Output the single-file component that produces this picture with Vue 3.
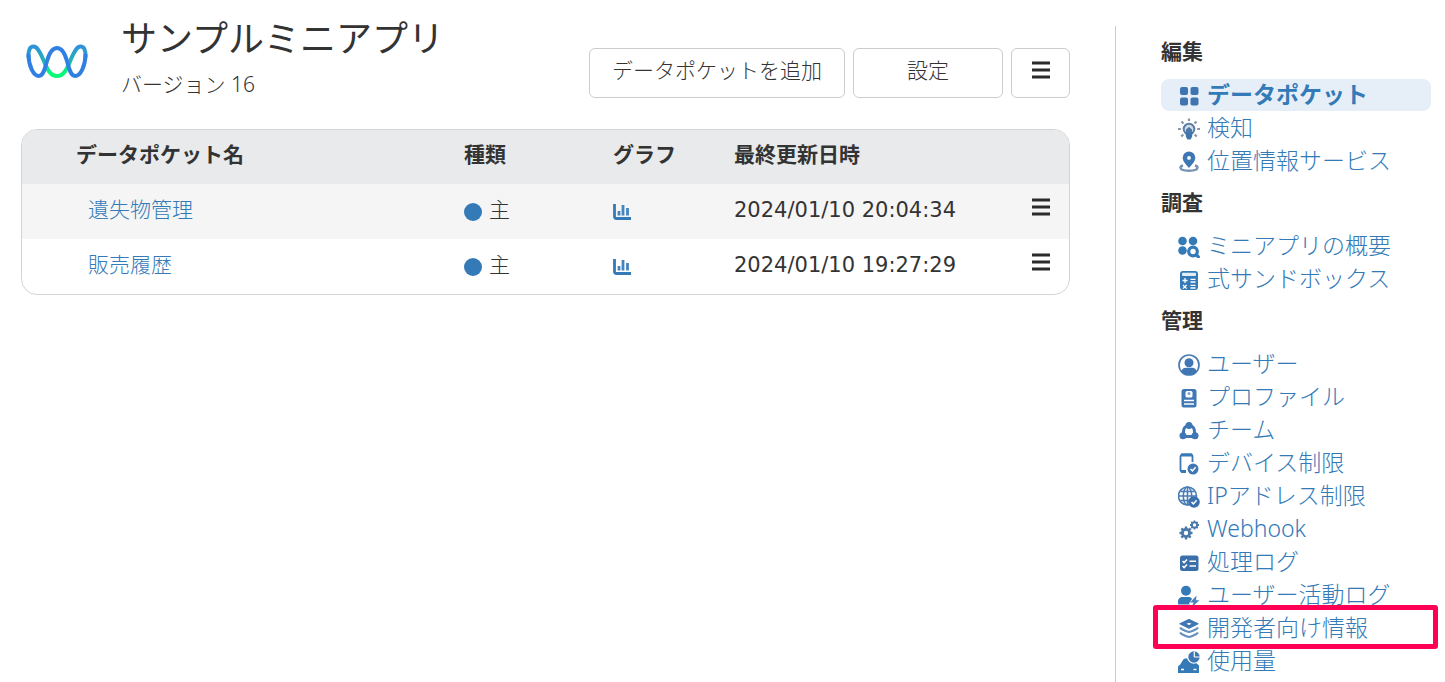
<script setup>
const pockets = [
  { name: '遺失物管理', kind: '主', updated: '2024/01/10 20:04:34' },
  { name: '販売履歴', kind: '主', updated: '2024/01/10 19:27:29' },
]

const groups = [
  {
    title: '編集',
    items: [
      { icon: 'grid', label: 'データポケット', active: true },
      { icon: 'bulb', label: '検知' },
      { icon: 'pin', label: '位置情報サービス' },
    ],
  },
  {
    title: '調査',
    items: [
      { icon: 'overview', label: 'ミニアプリの概要' },
      { icon: 'calc', label: '式サンドボックス' },
    ],
  },
  {
    title: '管理',
    items: [
      { icon: 'user', label: 'ユーザー' },
      { icon: 'profile', label: 'プロファイル' },
      { icon: 'team', label: 'チーム' },
      { icon: 'device', label: 'デバイス制限' },
      { icon: 'globe', label: 'IPアドレス制限' },
      { icon: 'gears', label: 'Webhook' },
      { icon: 'log', label: '処理ログ' },
      { icon: 'activity', label: 'ユーザー活動ログ' },
      { icon: 'layers', label: '開発者向け情報', marked: true },
      { icon: 'usage', label: '使用量' },
    ],
  },
]

const icons = {
  grid: '<g fill="#3f74b0"><rect x="2" y="2" width="8" height="8" rx="2"/><rect x="12.500" y="2" width="8" height="8" rx="2"/><rect x="2" y="12.500" width="8" height="8" rx="2"/><rect x="12.500" y="12.500" width="8" height="8" rx="2"/></g>',
  bulb: '<circle cx="11" cy="11" r="5.300" fill="#d3dde8" stroke="#5d7ea3" stroke-width="2"/><path d="M8.500 13h5l1 1.500-.5 4.500-1.500 2.500h-3L8 19l-.5-4.500z" fill="#3f74b0"/><path d="M8 11.500l3-2.500 3 2.500v3H8z" fill="#4d79a9"/><path d="M11 .5v2.500M3.500 3.500l2 2M18.500 3.500l-2 2M0 11h2.800M19.200 11H22M3.300 18.500l2-2M18.700 18.500l-2-2" stroke="#8795a7" stroke-width="2.200"/>',
  pin: '<path fill-rule="evenodd" d="M11 .5a6.300 6.300 0 0 1 6.300 6.300c0 3.700-3.500 6.700-6.300 10.200-2.800-3.500-6.300-6.500-6.300-10.200A6.300 6.300 0 0 1 11 .5zM11 5a1.900 1.900 0 1 0 0 3.800A1.900 1.900 0 0 0 11 5z" fill="#3f76b4"/><path d="M5 14.500c-2 .6-2.500 1.200-2.500 2C2.500 18.700 7 19.700 11 19.700s8.500-1 8.500-3.200c0-.8-.5-1.400-2.500-2" fill="none" stroke="#7592b3" stroke-width="2.400"/>',
  overview: '<g fill="#337ab7"><circle cx="4.500" cy="5" r="4.300"/><circle cx="15" cy="5" r="4.300"/><circle cx="4.500" cy="14.500" r="4.300"/></g><circle cx="15" cy="15.500" r="4.300" fill="#fff" stroke="#337ab7" stroke-width="3.200"/><path d="M18 18.500l3.500 3.500" stroke="#337ab7" stroke-width="3.200"/>',
  calc: '<rect x="2" y="2" width="18" height="19" rx="3" fill="#337ab7"/><rect x="4" y="3.800" width="14" height="3.200" rx="1" fill="#e4edf5"/><path d="M4.500 11.500h5M7 9v5M12.500 10.300h5M12.500 13h5M5 16l3.600 3.600M8.600 16L5 19.600M12.500 16.300h5M12.500 19h5" stroke="#fff" stroke-width="1.300"/>',
  user: '<circle cx="11" cy="11" r="10" fill="#fff" stroke="#4a7db5" stroke-width="1.700"/><circle cx="11" cy="8.800" r="4.500" fill="#3f76b4"/><path d="M3.600 17.700c0-2.700 2-4 4-4h6.800c2 0 4 1.300 4 4a10 10 0 0 1-14.800 0z" fill="#3f76b4"/>',
  profile: '<rect x="3.500" y="2" width="15" height="18.500" rx="2.500" fill="#3f76b4"/><rect x="7.500" y="4" width="7" height="6.500" rx="1.500" fill="#fff"/><circle cx="11" cy="6.500" r="1.500" fill="#7fa3cc"/><path d="M6 13.500h10M6 17h10" stroke="#fff" stroke-width="1.500"/>',
  team: '<path d="M11 5.500c-3.800 0-5.500 3-5.500 6.500v4.500h11V12c0-3.500-1.700-6.500-5.500-6.500z" fill="#fff" stroke="#3f76b4" stroke-width="3"/><g fill="#3f76b4"><circle cx="11" cy="5.500" r="3.500"/><circle cx="5" cy="15.700" r="3.500"/><circle cx="17" cy="15.700" r="3.500"/></g>',
  device: '<path d="M8 19H4.500a2 2 0 0 1-2-2V3.500a2 2 0 0 1 2-2h8a2 2 0 0 1 2 2V9" fill="none" stroke="#3f76b4" stroke-width="1.800"/><path d="M3 2h11M3 18.500h5" stroke="#337ab7" stroke-width="3"/><circle cx="15" cy="16" r="5.500" fill="#3f76b4"/><path d="M12.500 16l1.900 1.900 3.200-3.600" fill="none" stroke="#fff" stroke-width="1.500"/>',
  globe: '<g fill="none" stroke="#4a7db5" stroke-width="1.600"><circle cx="9.500" cy="10" r="9"/><ellipse cx="9.500" cy="10" rx="4.200" ry="9"/><path d="M9.500 1v18M.5 10h18M2.500 5.500h14M2.500 14.500h14"/></g><circle cx="16" cy="16" r="5.800" fill="#3a70ae"/><path d="M13.500 16l1.900 1.900 3.200-3.600" fill="none" stroke="#fff" stroke-width="1.500"/>',
  gears: '<g fill="none" stroke="#4a78aa"><circle cx="8" cy="14" r="3.600" stroke-width="2.800"/><path d="M8 7.500v3M8 17.500v3M1.500 14h3M11.500 14h3M3.400 9.400l2 2M10.600 16.600l2 2M3.400 18.600l2-2M10.600 11.400l2-2" stroke-width="2.400"/><circle cx="16.500" cy="6" r="2.600" stroke-width="1.900"/><path d="M16.500 1.500v2M16.500 8.500v2M12 6h2M19 6h2M13.300 2.800l1.400 1.400M18.300 7.800l1.400 1.400M13.300 9.200l1.400-1.400M18.300 4.200l1.400-1.400" stroke-width="1.800"/></g>',
  log: '<rect x="2" y="3.500" width="18.500" height="15.500" rx="2.500" fill="#3a6faa"/><path d="M4.500 9l1.600 1.600L9 7.500M4.500 14l1.600 1.600L9 12.500M11.500 9.300H18M11.500 14H18" fill="none" stroke="#fff" stroke-width="1.500"/>',
  activity: '<circle cx="8" cy="5.800" r="5" fill="#337ab7"/><path d="M0 19.500v-3c0-3 2-4.500 4.500-4.500h6c1.500 0 2.800.6 3.500 2l-3 4.500 1 1z" fill="#337ab7"/><path d="M18.500 10.500l-6.500 7h3.500L14 22l7.500-6.800h-3.500z" fill="#4a82bd"/>',
  layers: '<path fill-rule="evenodd" d="M11 1.500l9 4.300-9 4.300-9-4.300zM11 3.900L7.400 5.800 11 7.700l3.600-1.900z" fill="#3f76b4" stroke="#3f76b4" stroke-width="1.200" stroke-linejoin="round"/><path d="M2 9.500c1 1.500 3 2.400 4.500 2.900 2 .8 3.200 1.500 4.500 1.500s2.500-.7 4.500-1.500c1.500-.5 3.500-1.400 4.500-2.900M2 14.500c1 1.500 3 2.400 4.500 2.900 2 .8 3.200 1.500 4.500 1.500s2.500-.7 4.500-1.500c1.500-.5 3.500-1.400 4.500-2.900" fill="none" stroke="#6690c0" stroke-width="2.200"/>',
  usage: '<path d="M0 22v-5.500c0-1.500 1-2.300 2-2.800l3-4.700c.6-1 1.500-1.500 2.700-1.500H13l8 7V22z" fill="#337ab7"/><circle cx="15.800" cy="6.200" r="6.600" fill="#fff"/><circle cx="16" cy="6" r="5.700" fill="#3f76b4"/><path d="M16.300 6V.5M16.300 6h5.500" stroke="#fff" stroke-width="1.200"/><path d="M3 18.500h3M15.500 18.500h3" stroke="#fff" stroke-width="1.600"/>',
}
</script>

<template>
  <div class="page">
    <main class="main">
      <header class="head">
        <svg class="logo" viewBox="0 0 64 38" aria-hidden="true">
          <defs>
            <linearGradient id="wave" x1="0" y1="3" x2="0" y2="35" gradientUnits="userSpaceOnUse">
              <stop offset="0" stop-color="#2f91dc" />
              <stop offset="0.450" stop-color="#23b3b2" />
              <stop offset="0.850" stop-color="#07fb78" />
            </linearGradient>
          </defs>
          <g fill="none" stroke-width="4" stroke-linecap="round">
            <path d="M3.500 14C3.200 7 5 3.600 8.500 3.600c3.500 0 6 4.400 9.500 12.400C22 26 25 33 32 33s10-7 14-17c3.500-8 6-12.400 9.500-12.400 3.500 0 5.300 3.400 5 10.400" stroke="url(#wave)" />
            <path d="M3.500 12c.3 11 4.800 21 10.500 21 4.500 0 6-8 8-15S27 5 32 5s8 6 10 13 3.500 15 8 15c5.700 0 10.200-10 10.500-21" stroke="#3080e4" />
          </g>
        </svg>
        <div class="titles">
          <h1>サンプルミニアプリ</h1>
          <p>バージョン 16</p>
        </div>
        <div class="actions">
          <button type="button" class="add">データポケットを追加</button>
          <button type="button" class="settings">設定</button>
          <button type="button" class="more" aria-label="メニュー">
            <svg class="bars" viewBox="0 0 20 20" aria-hidden="true"><path d="M1 3h18M1 10h18M1 17h18" /></svg>
          </button>
        </div>
      </header>

      <div class="card">
        <table>
          <colgroup>
            <col class="c-name" /><col class="c-kind" /><col class="c-graph" /><col /><col class="c-menu" />
          </colgroup>
          <thead>
            <tr>
              <th scope="col" class="name">データポケット名</th>
              <th scope="col">種類</th>
              <th scope="col">グラフ</th>
              <th scope="col">最終更新日時</th>
              <td></td>
            </tr>
          </thead>
          <tbody>
            <tr v-for="p in pockets" :key="p.name">
              <td class="name"><a href="#">{{ p.name }}</a></td>
              <td><span class="kind"><span class="dot"></span>{{ p.kind }}</span></td>
              <td>
                <a href="#" class="chart" aria-label="グラフ">
                  <svg viewBox="0 0 18 16" aria-hidden="true">
                    <path d="M1.500 0v12.500q0 2 2 2H18" fill="none" stroke="#337ab7" stroke-width="2.800" />
                    <path d="M6 7v4.500M10 1v10.500M14.500 4v7.500" stroke="#4585bd" stroke-width="2.800" />
                  </svg>
                </a>
              </td>
              <td class="date">{{ p.updated }}</td>
              <td class="menu">
                <button type="button" class="rowmenu" aria-label="行メニュー">
                  <svg class="bars" viewBox="0 0 20 20" aria-hidden="true"><path d="M1 3h18M1 10h18M1 17h18" /></svg>
                </button>
              </td>
            </tr>
          </tbody>
        </table>
      </div>
    </main>

    <nav class="side">
      <section v-for="g in groups" :key="g.title">
        <h2>{{ g.title }}</h2>
        <ul>
          <li v-for="i in g.items" :key="i.label" :class="{ active: i.active, marked: i.marked }">
            <a href="#">
              <svg viewBox="0 0 22 22" aria-hidden="true" v-html="icons[i.icon]"></svg>
              <span>{{ i.label }}</span>
            </a>
          </li>
        </ul>
      </section>
    </nav>
  </div>
</template>

<style>
body {
  background: #fff;
}
</style>

<style scoped>
.page {
  display: flex;
  box-sizing: border-box;
  min-height: 100vh;
  max-height: 100vh;
  overflow: hidden;
  color: #333;
  font: 300 21px/32px "DejaVu Sans", "Noto Sans CJK JP", sans-serif;
}
.main {
  flex: 1;
  min-width: 0;
  padding: 16px 45px 0 21px;
}
.head {
  display: flex;
  align-items: flex-start;
  height: 113px;
}
.logo {
  width: 64px;
  height: 38px;
  margin: 27px 32px 0 4px;
}
.titles {
  flex: 1;
}
h1,
h2,
p,
ul {
  margin: 0;
  padding: 0;
}
h1 {
  font-size: 36px;
  line-height: 48px;
  font-weight: 400;
}
p {
  margin-top: 4px;
  font-family: "Noto Sans", "Noto Sans CJK JP", sans-serif;
}
.actions {
  display: flex;
  gap: 8px;
  margin-top: 32px;
}
button {
  font: inherit;
  color: inherit;
  padding: 0;
  background: #fff;
  cursor: pointer;
}
.actions button {
  box-sizing: border-box;
  height: 50px;
  padding-bottom: 4px;
  border: 1px solid #ccc;
  border-radius: 6px;
}
.add {
  width: 256px;
}
.settings {
  width: 150px;
}
.actions .more {
  width: 59px;
  padding-bottom: 8px;
}
.bars {
  display: inline-block;
  width: 20px;
  height: 20px;
  vertical-align: middle;
}
.bars path {
  stroke: #2b2b2b;
  stroke-width: 3;
}
.card {
  overflow: hidden;
  border: 1px solid #d4d4d4;
  border-radius: 16px;
}
table {
  width: 100%;
  table-layout: fixed;
  border-collapse: collapse;
}
.c-name {
  width: 442px;
}
.c-kind {
  width: 149px;
}
.c-graph {
  width: 121px;
}
.c-menu {
  width: 80px;
}
th,
td {
  box-sizing: border-box;
  height: 55px;
  padding: 0 0 4px;
  text-align: left;
  vertical-align: middle;
  font-weight: 300;
}
th {
  height: 54px;
  font-weight: 700;
}
thead td {
  height: 54px;
}
.date {
  font-weight: 400;
}
th.name {
  padding-left: 54px;
}
td.name {
  padding-left: 66px;
}
thead tr {
  background: #e8eaeb;
}
tbody tr:first-child {
  background: #f5f5f5;
}
a {
  color: #337ab7;
  text-decoration: none;
}
.kind {
  display: flex;
  align-items: center;
  gap: 7px;
}
.dot {
  width: 18px;
  height: 18px;
  margin-top: 4px;
  border-radius: 50%;
  background: #337ab7;
}
.chart {
  display: flex;
  padding-top: 4px;
}
.chart svg {
  width: 18px;
  height: 16px;
}
.menu {
  padding-right: 18px;
  text-align: right;
}
.rowmenu {
  display: inline-flex;
  border: 0;
  background: none;
}
.side {
  box-sizing: border-box;
  width: 330px;
  margin-top: 26px;
  padding: 0 14px 0 45px;
  border-left: 1px solid #ccc;
}
h2 {
  font-size: 21px;
  line-height: 53px;
  font-weight: 700;
}
ul {
  display: grid;
  gap: 1px;
  list-style: none;
}
li {
  position: relative;
  height: 32px;
  border-radius: 8px;
}
li a {
  display: flex;
  align-items: center;
  gap: 7px;
  padding-left: 17px;
  font-family: "Noto Sans", "Noto Sans CJK JP", sans-serif;
  font-size: 23px;
  line-height: 30px;
  white-space: nowrap;
}
li svg {
  flex: none;
  width: 22px;
  height: 22px;
  margin-top: 4px;
}
.active {
  background: #e6eff7;
}
.active a {
  font-weight: 700;
}
.marked::after {
  content: "";
  position: absolute;
  inset: -7px -7px -5px -8px;
  border: 5px solid #ff0055;
  border-radius: 3px;
  pointer-events: none;
}
</style>
